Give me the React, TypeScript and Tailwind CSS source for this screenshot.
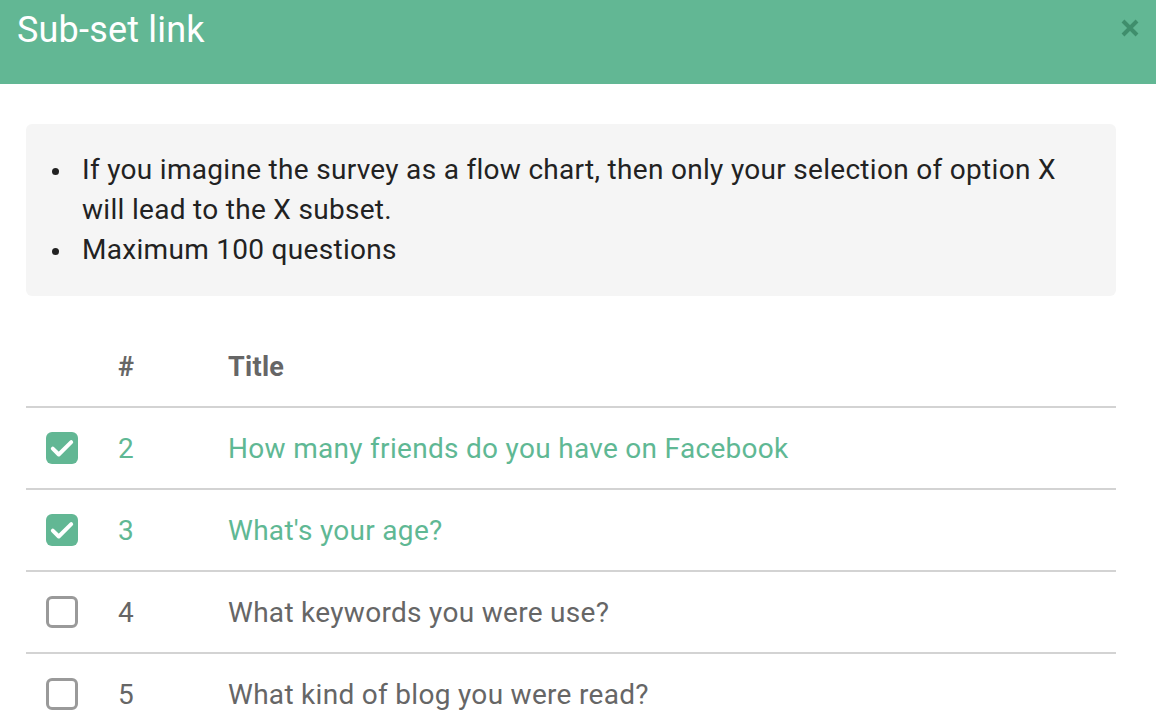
import React from "react";

const rows = [
  { n: 2, t: "How many friends do you have on Facebook", c: true },
  { n: 3, t: "What's your age?", c: true },
  { n: 4, t: "What keywords you were use?", c: false },
  { n: 5, t: "What kind of blog you were read?", c: false },
];

const bullets = [
  "If you imagine the survey as a flow chart, then only your selection of option X will lead to the X subset.",
  "Maximum 100 questions",
];

function Check({ checked }: { checked: boolean }) {
  if (checked)
    return (
      <div className="w-8 h-8 rounded-[6px] bg-[#62b794] flex items-center justify-center">
        <svg width="26" height="26" viewBox="0 0 24 24" fill="none">
          <path d="M3.5 12.5l5.5 5.5L20.5 6.5" stroke="white" strokeWidth="3.6" strokeLinecap="round" strokeLinejoin="round" />
        </svg>
      </div>
    );
  return <div className="w-8 h-8 rounded-[6px] border-[3px] border-[#9a9a9a] bg-white" />;
}

export default function App() {
  return (
    <div className="w-[1156px] h-[724px] bg-white overflow-hidden" style={{ fontFamily: "Roboto, 'Noto Sans', sans-serif" }}>
      <div className="h-[84px] bg-[#62b794] flex items-start justify-between">
        <div className="text-white text-[36px] leading-none pl-[17px] pt-[12px] tracking-[0.2px]">Sub-set link</div>
        <div className="pr-[16px] pt-[18px]">
          <svg width="20" height="20" viewBox="0 0 20 20">
            <path d="M3 3L17 17M17 3L3 17" stroke="#3f8e6c" strokeWidth="4" strokeLinecap="butt" />
          </svg>
        </div>
      </div>
      <div className="px-[26px] pt-[40px] w-[1142px]">
        <div className="bg-[#f5f5f5] rounded-[6px] pl-[24px] pr-[40px] pt-[26px] pb-[26px] h-[172px]">
          <ul className="text-[28px] leading-[40px] text-[#222] tracking-[0.3px]">
            {bullets.map((b) => (
              <li key={b} className="flex">
                <span className="w-[32px] shrink-0 h-[40px] flex items-center">
                  <span className="w-[7px] h-[7px] rounded-full bg-[#222] ml-[2px] mt-[2px]" />
                </span>
                <span>{b}</span>
              </li>
            ))}
          </ul>
        </div>
        <div className="mt-[29px]">
          <div className="h-[83px] flex items-center pt-[4px] border-b-2 border-[#d3d3d3] text-[27px] font-bold text-[#666] tracking-[0.3px]">
            <div className="w-[92px]" />
            <div className="w-[110px]">#</div>
            <div>Title</div>
          </div>
          {rows.map((r) => (
            <div key={r.n} className="h-[82px] flex items-center border-b-2 border-[#d3d3d3] text-[28px] tracking-[0.3px]">
              <div className="w-[92px] pl-[20px]">
                <Check checked={r.c} />
              </div>
              <div className={`w-[110px] pt-[2px] ${r.c ? "text-[#5fb894]" : "text-[#666]"}`}>{r.n}</div>
              <div className={`pt-[2px] ${r.c ? "text-[#5fb894]" : "text-[#666]"}`}>{r.t}</div>
            </div>
          ))}
        </div>
      </div>
    </div>
  );
}
